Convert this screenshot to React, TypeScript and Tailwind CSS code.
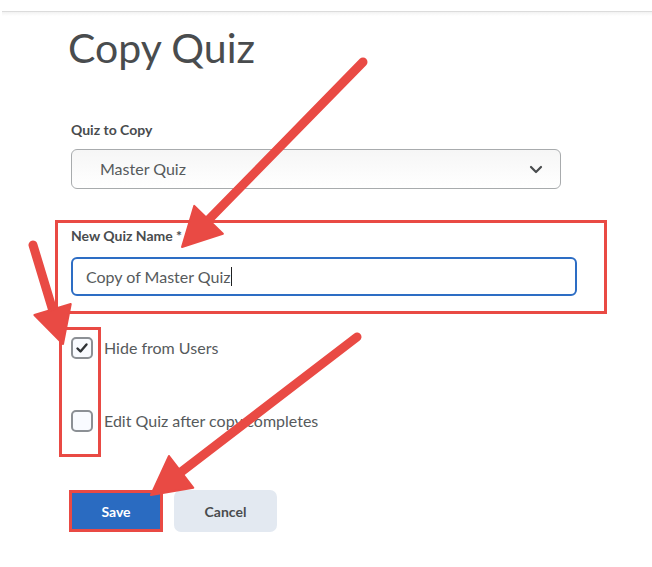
import React from "react";

type Pt = [number, number];

// red call-out arrow: round-capped shaft plus a filled triangular head
const Arrow = ({ from, to, head = 38, wing = 20 }: { from: Pt; to: Pt; head?: number; wing?: number }) => {
    const dx = to[0] - from[0];
    const dy = to[1] - from[1];
    const len = Math.hypot(dx, dy);
    const ux = dx / len;
    const uy = dy / len;
    const bx = to[0] - ux * head;
    const by = to[1] - uy * head;
    const nx = -uy;
    const ny = ux;
    const points = `${to[0]},${to[1]} ${bx + nx * wing},${by + ny * wing} ${bx - nx * wing},${by - ny * wing}`;

    return (
        <g>
            <line x1={from[0]} y1={from[1]} x2={bx + ux * 4} y2={by + uy * 4} stroke="#e94a44" strokeWidth={9} strokeLinecap="round" />
            <polygon points={points} fill="#e94a44" stroke="#e94a44" strokeWidth={2} strokeLinejoin="round" />
        </g>
    );
};

const Checkbox = ({ checked }: { checked?: boolean }) => (
    <div className="w-[22px] h-[22px] shrink-0 rounded-[5px] border-2 border-[#8c9095] bg-[#f9fbff] flex items-center justify-center">
        {checked && (
            <svg width="14" height="12" viewBox="0 0 14 12">
                <path d="M2.5 6.5 L5.5 9.5 L11.5 2.5" fill="none" stroke="#2f3336" strokeWidth="2.4" strokeLinecap="round" strokeLinejoin="round" />
            </svg>
        )}
    </div>
);

const App = () => {
    return (
        <div className="relative w-[652px] h-[567px] overflow-hidden bg-white text-[#494c4e]" style={{ fontFamily: "Lato, 'Open Sans', sans-serif" }}>
            <div className="h-[11px]" />
            <div className="ml-[2px] h-[5px] border-t border-[#dcdcdc] bg-gradient-to-b from-[#f2f2f2] to-white" />

            <div className="ml-[55px]">
                <h1 className="ml-[13px] mt-[11px] h-[42px] text-[41px] leading-[42px] font-normal text-[#494c4e]">Copy Quiz</h1>

                <div className="ml-[16px] mt-[51px] text-[14px] leading-[20px] font-bold">Quiz to Copy</div>
                <div className="ml-[16px] mt-[9px] w-[490px] h-[40px] rounded-[6px] border border-[#a8abad] bg-gradient-to-b from-[#f6f6f6] to-white flex items-center justify-between pl-[28px] pr-[17px]">
                    <span className="text-[16px] text-[#565a5c]">Master Quiz</span>
                    <svg width="14" height="9" viewBox="0 0 14 9">
                        <path d="M2 2 L7 7 L12 2" fill="none" stroke="#494c4e" strokeWidth="2.2" strokeLinecap="round" strokeLinejoin="round" />
                    </svg>
                </div>

                <div className="mt-[31px] w-[552px] border-[3px] border-[#e94a44] pt-[3px] pb-[15px] pl-[13px]">
                    <div className="text-[14px] leading-[20px] font-bold">New Quiz Name *</div>
                    <div className="mt-[11px] w-[506px] h-[39px] rounded-[6px] border-2 border-[#2d6dc4] flex items-center pl-[13px]">
                        <span className="text-[16px] text-[#565a5c]">Copy of Master Quiz</span>
                        <span className="w-px h-[19px] bg-[#202122]" />
                    </div>
                </div>

                <div className="ml-[16px] mt-[23px] flex items-center gap-[11px] h-[22px]">
                    <Checkbox checked />
                    <span className="text-[16px] text-[#565a5c]">Hide from Users</span>
                </div>
                <div className="ml-[16px] mt-[51px] flex items-center gap-[11px] h-[22px]">
                    <Checkbox />
                    <span className="text-[16px] text-[#565a5c]">Edit Quiz after copy completes</span>
                </div>

                <div className="ml-[14px] mt-[58px] flex gap-[11px]">
                    <button className="w-[94px] h-[42px] border-[3px] border-[#e94a44] bg-[#2a6bc1] text-white text-[14px] font-bold">Save</button>
                    <button className="w-[103px] h-[42px] rounded-[7px] bg-[#e3e9f1] text-[#494c4e] text-[14px] font-bold">Cancel</button>
                </div>
            </div>

            <svg className="absolute inset-0 pointer-events-none" width="652" height="567">
                <rect x="60.5" y="328.5" width="39" height="127" fill="none" stroke="#e94a44" strokeWidth="3" />
                <Arrow from={[363, 62]} to={[182, 247]} />
                <Arrow from={[33, 245]} to={[63, 344]} head={36} wing={19} />
                <Arrow from={[357, 337]} to={[151, 495]} />
            </svg>
        </div>
    );
};

export default App;
